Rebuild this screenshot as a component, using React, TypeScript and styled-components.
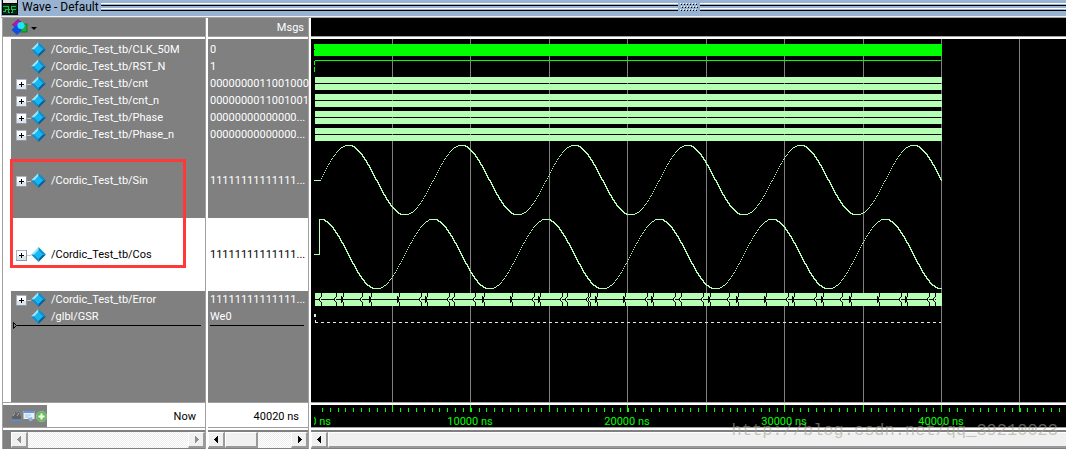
import React from 'react';
import styled, { createGlobalStyle } from 'styled-components';

const GlobalStyle = createGlobalStyle`
  * { box-sizing: border-box; }
  body {
    margin: 0;
    background: #ffffff;
    font-family: Roboto, sans-serif;
    font-size: 11px;
    line-height: 17px;
    color: #000000;
  }
  ul { list-style: none; margin: 0; padding: 0; }
  h1 { margin: 0; font-size: 12px; font-weight: 400; }
`;

const GREY = '#808080';
const LINE = '#a0a0a0';
const BUS = '#b4ffb4';
const GREEN = '#00ff00';

const Window = styled.div`
  position: relative;
  display: flex;
  flex-direction: column;
  min-height: 100vh;
  overflow: hidden;
`;

const TitleBar = styled.header`
  display: flex;
  align-items: flex-start;
  height: 18px;
  margin-left: 1px;
  padding-left: 1px;
  background: #98b3d1;
  border-bottom: 1px solid ${LINE};
  box-shadow: inset 0 -1px 0 #f0f0f0;
  h1 { line-height: 15px; margin-left: 4px; min-width: 79px; white-space: nowrap; }
`;

const Grip = styled.div<{ $grow: number }>`
  flex: ${(p) => p.$grow} 1 0;
  height: 8px;
  margin-top: 3px;
  background: linear-gradient(#fff 1px, transparent 1px 2px, #000 2px 3px, transparent 3px 5px, #fff 5px 6px, transparent 6px 7px, #000 7px);
`;

const GripDots = styled.svg`
  margin: 3px 2px 0;
`;

const Panes = styled.main`
  flex: 1;
  display: flex;
  margin-left: 2px;
  border-left: 1px solid ${LINE};
`;

const Pane = styled.section<{ $width?: number }>`
  display: flex;
  flex-direction: column;
  min-width: 0;
  flex: ${(p) => (p.$width ? `0 0 ${p.$width}px` : '1 1 0')};
  border-right: ${(p) => (p.$width ? `1px solid ${LINE}` : 'none')};
  margin-right: ${(p) => (p.$width ? '2px' : '0')};
`;

const PaneHeader = styled.div<{ $dark?: boolean }>`
  display: flex;
  align-items: center;
  justify-content: space-between;
  height: 19px;
  flex: none;
  padding: 0 4px 0 8px;
  margin-bottom: 2px;
  background: ${(p) => (p.$dark ? '#000' : GREY)};
  border-bottom: 1px solid ${LINE};
  color: #ffffff;
`;

const HeaderText = styled.span`
  margin-left: auto;
`;

const IconButton = styled.button`
  display: flex;
  align-items: center;
  padding: 0;
  border: 0;
  background: none;
`;

const SignalList = styled.ul<{ $inset?: boolean }>`
  flex: 1;
  margin-left: ${(p) => (p.$inset ? '8px' : '0')};
  padding-top: 2px;
  background: ${GREY};
`;

const Row = styled.li<{ $height: number; $selected?: boolean }>`
  display: flex;
  align-items: center;
  height: ${(p) => p.$height}px;
  padding-left: 2px;
  background: ${(p) => (p.$selected ? '#ffffff' : GREY)};
  color: ${(p) => (p.$selected ? '#000000' : '#ffffff')};
  white-space: nowrap;
`;

const Expand = styled.button`
  display: flex;
  width: 11px;
  height: 11px;
  margin: 1px 0 0 3px;
  padding: 0;
  border: 0;
  background: none;
`;

const Stem = styled.span<{ $shown: boolean }>`
  width: ${(p) => (p.$shown ? 4 : 18)}px;
  height: 1px;
  margin-top: 1px;
  background: ${(p) => (p.$shown ? '#c8c8c8' : 'transparent')};
`;

const SignalName = styled.span`
  margin-left: 5px;
`;

const InsertLine = styled.li`
  display: flex;
  align-items: center;
  height: 7px;
  margin: -3px 4px 0 2px;
  &::after { content: ''; flex: 1; height: 1px; background: #000; }
`;

const Status = styled.div<{ $dark?: boolean }>`
  display: flex;
  align-items: center;
  justify-content: space-between;
  flex: none;
  height: 26px;
  border-top: 1px solid ${LINE};
  border-bottom: 1px solid ${LINE};
  padding: 2px 0 0;
  background: ${(p) => (p.$dark ? 'linear-gradient(#fff 2px, #000 2px)' : '#fff')};
`;

const StatusText = styled.span`
  margin: 0 9px 0 auto;
`;

const Tools = styled.div`
  display: flex;
  align-items: center;
  gap: 1px;
  width: 44px;
  height: 22px;
  padding-left: 8px;
  background: ${GREY};
`;

const ScrollBar = styled.div<{ $inset?: boolean }>`
  display: flex;
  flex: none;
  height: 19px;
  margin-top: 2px;
  padding-left: ${(p) => (p.$inset ? 8 : 0)}px;
  border-top: 2px solid ${GREY};
  border-bottom: 1px solid ${GREY};
  background: repeating-conic-gradient(#fff 0 25%, #ececec 0 50%) 0 0 / 2px 2px;
  box-shadow: inset ${(p) => (p.$inset ? 8 : 0)}px 0 0 ${GREY};
`;

const ScrollButton = styled.button<{ $end?: boolean }>`
  display: flex;
  align-items: center;
  justify-content: center;
  width: 17px;
  height: 16px;
  margin-left: ${(p) => (p.$end ? 'auto' : 0)};
  padding: ${(p) => (p.$end ? '0 0 0 2px' : '0 2px 0 0')};
  background: #f0f0f0;
  border: 1px solid #fff;
  border-right: 2px solid #9a9a9a;
  border-bottom: 2px solid #9a9a9a;
`;

const Thumb = styled.div<{ $width?: number }>`
  flex: ${(p) => (p.$width ? `0 0 ${p.$width}px` : '1')};
  background: #f0f0f0;
  border: 1px solid #fff;
  border-right: ${(p) => (p.$width ? '2px solid #9a9a9a' : '0')};
  border-bottom: 2px solid #9a9a9a;
`;

const Canvas = styled.svg`
  display: block;
  width: 100%;
  shape-rendering: crispEdges;
`;

const WaveArea = styled.div`
  flex: 1;
  background: #000;
`;

const Highlight = styled.div`
  position: absolute;
  left: 10px;
  top: 159px;
  width: 176px;
  height: 109px;
  border: 3px solid #ff3838;
  pointer-events: none;
`;

const Watermark = styled.div`
  position: absolute;
  right: 8px;
  bottom: 7px;
  font: 17px/22px "Liberation Mono", monospace;
  color: rgba(168, 162, 150, 0.6);
  pointer-events: none;
`;

type Signal = { name: string; value: string; height: number; bus?: boolean; selected?: boolean };

const signals: Signal[] = [
  { name: '/Cordic_Test_tb/CLK_50M', value: '0', height: 17 },
  { name: '/Cordic_Test_tb/RST_N', value: '1', height: 17 },
  { name: '/Cordic_Test_tb/cnt', value: '0000000011001000', height: 17, bus: true },
  { name: '/Cordic_Test_tb/cnt_n', value: '0000000011001001', height: 17, bus: true },
  { name: '/Cordic_Test_tb/Phase', value: '00000000000000...', height: 17, bus: true },
  { name: '/Cordic_Test_tb/Phase_n', value: '00000000000000...', height: 17, bus: true },
  { name: '/Cordic_Test_tb/Sin', value: '11111111111111...', height: 75, bus: true },
  { name: '/Cordic_Test_tb/Cos', value: '11111111111111...', height: 73, bus: true, selected: true },
  { name: '/Cordic_Test_tb/Error', value: '11111111111111...', height: 17, bus: true },
  { name: '/glbl/GSR', value: 'We0', height: 17 },
];

const START = 3;
const END = 631;
const gridX = [81, 159, 238, 316, 395, 473, 552, 630, 708];
const timeLabels = [
  { x: 159, text: '10000 ns' },
  { x: 316, text: '20000 ns' },
  { x: 473, text: '30000 ns' },
  { x: 630, text: '40000 ns' },
];
const ticks = Array.from({ length: 95 }, (_, i) => Math.round(3 + 7.84 * (i + 1)));

/* Positions at which the error bus changes; true marks two changes close together. */
const errorEdges: [number, boolean][] = [
  [10, false], [25, false], [32, true], [51, false], [60, true], [88, true], [110, false], [116, true],
  [138, false], [143, false], [164, false], [173, true], [201, true], [223, false], [229, true], [251, false],
  [256, false], [277, false], [279, false], [286, true], [314, true], [336, false], [342, true], [364, false],
  [370, false], [392, false], [399, true], [418, false], [427, true], [455, true], [477, false], [483, true],
  [505, false], [512, true], [531, false], [540, true], [568, true], [590, false], [596, true], [618, false], [624, false],
];

/* One mark per pixel column; falling stretches are joined up, rising ones stay dotted. */
function sampledPath(mid: number, wave: (t: number) => number): string {
  let d = '';
  const level = (x: number) => Math.round(mid - 34.9 * wave((2 * Math.PI * (x - 9)) / 113));
  for (let x = 9; x < END; x += 1) {
    const y = level(x);
    const h = Math.max(1, level(x + 1) - y + 1);
    d += `M${x} ${y}h1v${h}h-1z`;
  }
  return d;
}

const sinPath = sampledPath(140.5, Math.sin);
const cosPath = sampledPath(214.5, Math.cos);

const Diamond = () => (
  <svg width="15" height="15" viewBox="0 0 15 15" aria-hidden="true">
    <path d="M7.500 0L0 7.500H3.500L7.500 3.500Z" fill="#9be6fb" />
    <path d="M7.500 0L15 7.500H11.500L7.500 3.500Z" fill="#0d8fd0" />
    <path d="M0 7.500L7.500 15V11.500L3.500 7.500Z" fill="#118fce" />
    <path d="M15 7.500L7.500 15V11.500L11.500 7.500Z" fill="#075f9c" />
    <path d="M7.500 3L12 7.500L7.500 12L3 7.500Z" fill="#12b9f4" />
  </svg>
);

const PlusBox = () => (
  <svg width="11" height="11" shapeRendering="crispEdges" aria-hidden="true">
    <rect width="11" height="11" rx="1" fill="#8a97ad" />
    <rect x="0" y="0" width="10" height="10" fill="#fff" />
    <rect x="1" y="6" width="9" height="4" fill="#dfe3ea" />
    <path d="M0 0h10v1h-10zM0 0h1v10h-1z" fill="#aab4c6" />
    <path d="M3 5h5v1h-5zM5 3h1v5h-1z" fill="#000" />
  </svg>
);

const Arrow = ({ right, off }: { right?: boolean; off?: boolean }) => (
  <svg width="5" height="7" shapeRendering="crispEdges" aria-hidden="true">
    <path
      d={right ? 'M0 0h1v1h1v1h1v1h1v1h-1v1h-1v1h-1v1h-1z' : 'M4 0h1v7h-1v-1h-1v-1h-1v-1h-1v-1h1v-1h1v-1h1z'}
      fill={off ? '#8f8f8f' : '#000'}
    />
  </svg>
);

const AppIcon = () => (
  <svg width="16" height="15" shapeRendering="crispEdges" aria-hidden="true">
    <rect width="16" height="15" fill="#000" />
    <rect x="1" width="14" height="3" fill="#e8e8e8" />
    <rect x="1" y="4" width="14" height="10" fill="#062a0c" />
    <path d="M1 6h5v3h3v-3h5M1 11h2v-2h3v3h4v-3h4" fill="none" stroke="#12c060" />
    <path d="M8 4v10" stroke="#000" />
  </svg>
);

const ObjectsIcon = () => (
  <svg width="27" height="17" viewBox="0 0 27 17" aria-hidden="true">
    <path d="M1.500 6L7 .500L10 3L5 8Z" fill="#b414c8" stroke="#5c0a68" strokeWidth=".6" />
    <rect x="9" y="5" width="7" height="8" fill="#1cae3c" stroke="#0b6420" strokeWidth=".7" />
    <path d="M5.500 6L11 11L6 16L.500 11Z" fill="#0b50e6" />
    <circle cx="10" cy="6.500" r="3.600" fill="#1fe4f4" />
    <path d="M20 8h6l-3 3z" fill="#000" />
  </svg>
);

const BinocularsIcon = () => (
  <svg width="11" height="11" viewBox="0 0 11 11" aria-hidden="true">
    <path d="M1 6L4 1H5L6 3L7 1H8L10 6V8H1Z" fill="#5d6164" />
    <path d="M2 5L4 2M6 5L8 2" stroke="#a9adb0" />
    <path d="M1 9.500h9M2.500 8L1 9.500L2.500 11M8.500 8L10 9.500L8.500 11" stroke="#4b8fe0" fill="none" />
  </svg>
);

const FormIcon = () => (
  <svg width="12" height="12" viewBox="0 0 12 12" aria-hidden="true">
    <rect x=".5" y="1" width="11" height="8" fill="#e8f0fa" />
    <rect x=".5" y="1" width="11" height="2" fill="#5f9be4" />
    <path d="M2 5h6M2 7h4" stroke="#a8c4e6" />
    <path d="M5 8L9 7L10 10L7 11.500Z" fill="#8bb8ea" />
  </svg>
);

const AddIcon = () => (
  <svg width="11" height="11" viewBox="0 0 11 11" aria-hidden="true">
    <circle cx="5.500" cy="5.500" r="5.200" fill="#62bd58" stroke="#9ad792" strokeWidth=".6" />
    <path d="M5.500 2.500v6M2.500 5.500h6" stroke="#fff" strokeWidth="2" />
  </svg>
);

const Waves = () => (
  <Canvas height="363" role="img" aria-label="Signal waveforms">
    {gridX.map((x) => (
      <rect key={x} x={x} y="0" width="1" height="100%" fill={GREY} />
    ))}
    <rect x={START} y="5" width={END - START} height="12" fill={GREEN} />
    <rect x={START} y="10" width="1" height="1" fill="#000" />
    <path d="M4 21h626v1h-626zM3 22h1v4h-1zM3 28h1v5h-1z" fill={GREEN} />
    {[38, 55, 72, 89].map((y) => (
      <path key={y} d={`M4 ${y}h627v6h-627zM4 ${y + 7}h627v6h-627z`} fill={BUS} />
    ))}
    <path d={`M3 141h6v1h-6z${sinPath}`} fill={BUS} />
    <path d={`M3 215h6v1h-6zM8 180h1v36h-1z${cosPath}`} fill={BUS} />
    <rect x="4" y="254" width="627" height="13" fill={BUS} />
    <rect x="4" y="260" width="621" height="1" fill="#000" />
    {errorEdges.map(([x, double]) => (
      <g key={x}>
        <rect x={x - 1} y="259" width="1" height="3" fill={BUS} />
        <path d={`M${x} 254h1v4h-1zM${x} 263h1v4h-1z`} fill="#000" />
        <path
          d={double ? `M${x - 2} 257h1v7h-1zM${x - 1} 258h1v5h-1z` : `M${x - 1} 258h1v1h-1zM${x - 2} 259h1v3h-1zM${x - 1} 262h1v1h-1z`}
          fill="#000"
        />
      </g>
    ))}
    <path d="M3 275h2v3h-2zM4 281h1v2h-1z" fill="#e8e8e8" />
    <path d="M4 283.500H630" stroke="#e8e8e8" strokeDasharray="3 3" />
  </Canvas>
);

const Ruler = () => (
  <Canvas height="22" role="img" aria-label="Time axis">
    {ticks.map((x) => (
      <rect key={x} x={x} y="3" width="1" height="4" fill={GREEN} />
    ))}
    {gridX.map((x) => (
      <rect key={x} x={x} y="0" width="1" height="7" fill={GREEN} />
    ))}
    <svg x={START} width="60" height="22">
      <text x="17" y="20" textAnchor="end" fill={GREEN}>0 ns</text>
    </svg>
    {timeLabels.map((l) => (
      <text key={l.x} x={l.x} y="20" textAnchor="middle" fill={GREEN}>{l.text}</text>
    ))}
  </Canvas>
);

export default function App() {
  return (
    <Window>
      <GlobalStyle />
      <TitleBar>
        <AppIcon />
        <h1>Wave - Default</h1>
        <Grip $grow={577} />
        <GripDots width="18" height="8" shapeRendering="crispEdges" aria-hidden="true">
          {[0, 3, 6, 9, 12, 15].map((x) => (
            <g key={x}>
              <path d={`M${x} 0h1v1h-1zM${x + 1} 3h1v1h-1zM${x} 6h1v1h-1z`} fill="#fff" />
              <path d={`M${x + 1} 1h1v1h-1zM${x + 2} 4h1v1h-1zM${x + 1} 7h1v1h-1z`} fill="#000" />
            </g>
          ))}
        </GripDots>
        <Grip $grow={366} />
      </TitleBar>
      <Panes>
        <Pane $width={203}>
          <PaneHeader>
            <IconButton aria-label="Object filter"><ObjectsIcon /></IconButton>
          </PaneHeader>
          <SignalList $inset>
            {signals.map((s) => (
              <Row key={s.name} $height={s.height} $selected={s.selected}>
                {s.bus && <Expand aria-label={`Expand ${s.name}`}><PlusBox /></Expand>}
                <Stem $shown={!!s.bus} />
                <Diamond />
                <SignalName>{s.name}</SignalName>
              </Row>
            ))}
            <InsertLine>
              <svg width="4" height="7" aria-hidden="true">
                <path d="M.500 .500L3.500 3.500L.500 6.500Z" fill="none" stroke="#000" />
              </svg>
            </InsertLine>
          </SignalList>
          <Status>
            <Tools>
              <IconButton aria-label="Find"><BinocularsIcon /></IconButton>
              <IconButton aria-label="Edit grid"><FormIcon /></IconButton>
              <IconButton aria-label="Add cursor"><AddIcon /></IconButton>
            </Tools>
            <StatusText>Now</StatusText>
          </Status>
          <ScrollBar $inset>
            <ScrollButton aria-label="Scroll names left" disabled><Arrow off /></ScrollButton>
            <ScrollButton aria-label="Scroll names right" disabled $end><Arrow right off /></ScrollButton>
          </ScrollBar>
        </Pane>
        <Pane $width={101}>
          <PaneHeader>
            <HeaderText>Msgs</HeaderText>
          </PaneHeader>
          <SignalList>
            {signals.map((s) => (
              <Row key={s.name} $height={s.height} $selected={s.selected}>{s.value}</Row>
            ))}
            <InsertLine />
          </SignalList>
          <Status><StatusText>40020 ns</StatusText></Status>
          <ScrollBar>
            <ScrollButton aria-label="Scroll values left"><Arrow /></ScrollButton>
            <Thumb $width={33} />
            <ScrollButton aria-label="Scroll values right" $end><Arrow right /></ScrollButton>
          </ScrollBar>
        </Pane>
        <Pane>
          <PaneHeader $dark />
          <WaveArea><Waves /></WaveArea>
          <Status $dark><Ruler /></Status>
          <ScrollBar>
            <ScrollButton aria-label="Scroll waves left"><Arrow /></ScrollButton>
            <Thumb />
          </ScrollBar>
        </Pane>
      </Panes>
      <Highlight />
      <Watermark>http://blog.csdn.net/qq_39210023</Watermark>
    </Window>
  );
}
